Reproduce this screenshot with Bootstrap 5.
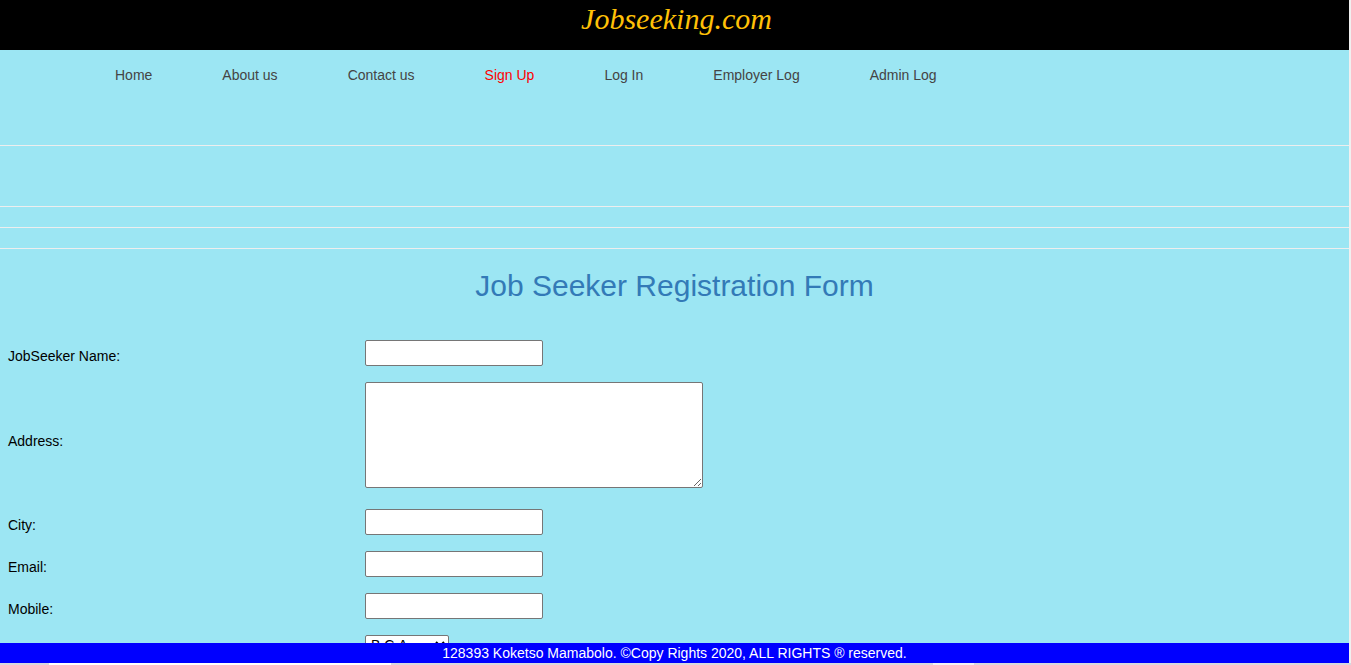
<!DOCTYPE html>
<html lang="en">
<head>
<meta charset="utf-8">
<meta name="viewport" content="width=device-width, initial-scale=1">
<title>Job Seeker Registration</title>
<link href="https://cdn.jsdelivr.net/npm/bootstrap@5.3.0/dist/css/bootstrap.min.css" rel="stylesheet">
<style>
  body { font-family: "Liberation Sans", Arial, sans-serif; font-size: 14px; line-height: 20px; color: #000; background: #f0f0f0; }
  .site { background: #9ce6f3; margin-right: 2px; }
  .brand-bar { background: #000; height: 50px; padding-left: 4px; }
  .brand-bar a { font: italic 30px/38px "Bodoni MT", "Liberation Serif", "Times New Roman", serif; color: #ffc107; }
  .site-nav { padding: 0 80px; height: 95px; }
  .site-nav .nav-link { padding: 15px 35px; color: #444; }
  .site-nav .nav-link.active { color: #f00; }
  .rule { border-top: 1px solid #eee; height: 21px; }
  .rule-tall { height: 61px; }
  h1 { font-size: 30px; line-height: 33px; color: #337ab7; margin: 0 0 30px; }
  .page-scroll { scrollbar-width: none; min-height: 0; }
  .form-line { padding: 8px; }
  .form-line label, .form-line-lead { width: 357px; padding-top: 6px; }
  .field { border: 1px solid #767676; border-radius: 2px; background: #fff; padding: 1px 2px; width: 178px; height: 26px; }
  .field-area { width: 338px; height: 106px; margin-bottom: 5px; resize: both; }
  select.field { width: 84px; height: 19px; padding: 0 1px; }
  .foot { background: #00f; color: #fff; margin-right: 2px; }
  .strip { height: 2px; background: #d8d8e0; }
  .strip-gap { width: 49px; }
  .strip-search { width: 342px; background: #fff; }
  .strip-space { width: 542px; }
  .strip-app { width: 41px; background: #f2f2f6; }
</style>
</head>
<body>
<div class="d-flex flex-column vh-100">
  <div class="site page-scroll flex-fill overflow-auto">
    <header class="brand-bar text-center"><a href="#" class="text-decoration-none">Jobseeking.com</a></header>
    <nav class="site-nav">
      <ul class="nav">
        <li class="nav-item"><a class="nav-link" href="#">Home</a></li>
        <li class="nav-item"><a class="nav-link" href="#">About us</a></li>
        <li class="nav-item"><a class="nav-link" href="#">Contact us</a></li>
        <li class="nav-item"><a class="nav-link active" href="#">Sign Up</a></li>
        <li class="nav-item"><a class="nav-link" href="#">Log In</a></li>
        <li class="nav-item"><a class="nav-link" href="#">Employer Log</a></li>
        <li class="nav-item"><a class="nav-link" href="#">Admin Log</a></li>
      </ul>
    </nav>
    <div class="rule rule-tall"></div>
    <div class="rule"></div>
    <div class="rule"></div>
    <div class="rule"></div>
    <main>
      <h1 class="text-center fw-normal">Job Seeker Registration Form</h1>
      <form>
        <div class="form-line d-flex align-items-center">
          <label for="name">JobSeeker Name:</label><input id="name" type="text" class="field">
        </div>
        <div class="form-line d-flex align-items-center">
          <label for="address">Address:</label><textarea id="address" class="field field-area"></textarea>
        </div>
        <div class="form-line d-flex align-items-center">
          <label for="city">City:</label><input id="city" type="text" class="field">
        </div>
        <div class="form-line d-flex align-items-center">
          <label for="email">Email:</label><input id="email" type="email" class="field">
        </div>
        <div class="form-line d-flex align-items-center">
          <label for="mobile">Mobile:</label><input id="mobile" type="tel" class="field">
        </div>
        <div class="form-line d-flex align-items-start">
          <div class="form-line-lead"></div><select id="course" class="field" aria-label="Qualification"><option>B.C.A</option></select>
        </div>
      </form>
    </main>
  </div>
  <footer class="foot text-center">128393 Koketso Mamabolo. ©Copy Rights 2020, ALL RIGHTS ® reserved.</footer>
  <div class="strip d-flex">
    <div class="strip-gap"></div><div class="strip-search"></div><div class="strip-space"></div><div class="strip-app"></div>
  </div>
</div>
<script src="https://cdn.jsdelivr.net/npm/bootstrap@5.3.0/dist/js/bootstrap.bundle.min.js"></script>
</body>
</html>
